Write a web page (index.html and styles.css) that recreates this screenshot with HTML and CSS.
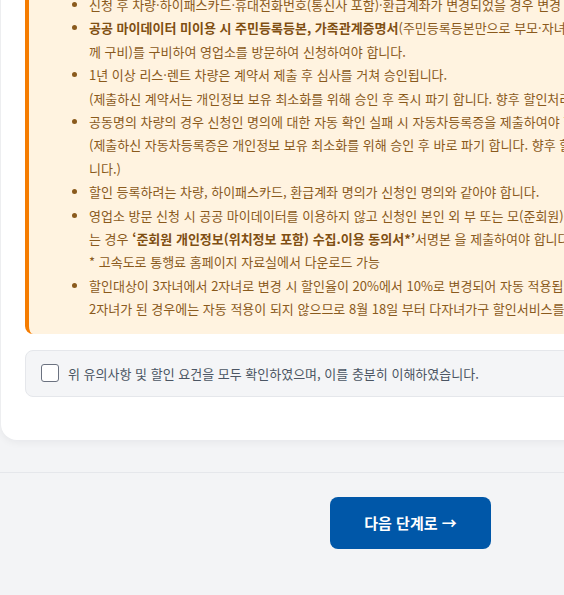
FILE: index.html
```html
<!DOCTYPE html>
<html lang="ko">
<head>
<meta charset="utf-8">
<title>다자녀가구 할인 신청</title>
<link rel="stylesheet" href="styles.css">
</head>
<body>
<main class="page">
  <section class="card">
    <div class="notice">
      <ul class="notice-list">
        <li>신청 후 차량·하이패스카드·휴대전화번호(통신사 포함)·환급계좌가 변경되었을 경우 변경 신청을 하여야 합니다.</li>
        <li><strong>공공 마이데이터 미이용 시 주민등록등본, 가족관계증명서</strong>(주민등록등본만으로 부모·자녀 관계 확인이 어려운 경우 함<br>께 구비)를 구비하여 영업소를 방문하여 신청하여야 합니다.</li>
        <li>1년 이상 리스·렌트 차량은 계약서 제출 후 심사를 거쳐 승인됩니다.<br>(제출하신 계약서는 개인정보 보유 최소화를 위해 승인 후 즉시 파기 합니다. 향후 할인처리 시 재제출)</li>
        <li>공동명의 차량의 경우 신청인 명의에 대한 자동 확인 실패 시 자동차등록증을 제출하여야 합니다.<br>(제출하신 자동차등록증은 개인정보 보유 최소화를 위해 승인 후 바로 파기 합니다. 향후 할인 시 재제출 하셔야 합<br>니다.)</li>
        <li>할인 등록하려는 차량, 하이패스카드, 환급계좌 명의가 신청인 명의와 같아야 합니다.</li>
        <li>영업소 방문 신청 시 공공 마이데이터를 이용하지 않고 신청인 본인 외 부 또는 모(준회원)를 등록하려<br>는 경우 <strong>‘준회원 개인정보(위치정보 포함) 수집.이용 동의서*’</strong>서명본 을 제출하여야 합니다.<br>* 고속도로 통행료 홈페이지 자료실에서 다운로드 가능</li>
        <li>할인대상이 3자녀에서 2자녀로 변경 시 할인율이 20%에서 10%로 변경되어 자동 적용됩니다.<br>2자녀가 된 경우에는 자동 적용이 되지 않으므로 8월 18일 부터 다자녀가구 할인서비스를 신청하세요.</li>
      </ul>
    </div>
    <label class="agree">
      <input class="agree-check" type="checkbox">
      <span class="agree-text">위 유의사항 및 할인 요건을 모두 확인하였으며, 이를 충분히 이해하였습니다.</span>
    </label>
  </section>
  <footer class="actions">
    <button class="btn-next" type="button">다음 단계로 →</button>
  </footer>
</main>
</body>
</html>
```

FILE: styles.css
```css
html, body {
  margin: 0;
  padding: 0;
  background: #f3f4f6;
  overflow-x: hidden;
}

body {
  font-family: "Noto Sans CJK KR", "Noto Sans", sans-serif;
}

.page {
  width: 821px;
  min-height: 640px;
}

.card {
  margin: -47px 0 0 1px;
  background: #ffffff;
  border-radius: 16px;
  box-shadow: 0 2px 8px rgba(15, 23, 42, 0.06);
  padding: 24px 24px 43px;
}

.notice {
  background: #fff3e0;
  border-left: 4px solid #f57c00;
  border-radius: 8px;
  padding: 16px 20px 13px;
}

.notice-list {
  margin: 0;
  padding-left: 40px;
  color: #8a5a1c;
  font-size: 13px;
  line-height: 23.4px;
  white-space: nowrap;
}

.notice-list strong {
  font-weight: 700;
  color: #7f4f12;
}

.agree {
  margin-top: 16px;
  display: flex;
  align-items: center;
  gap: 9px;
  background: #f4f5f7;
  border: 1px solid #e5e7eb;
  border-radius: 8px;
  padding: 13px 15px;
  cursor: pointer;
}

.agree-check {
  appearance: none;
  -webkit-appearance: none;
  margin: 0;
  width: 18px;
  height: 18px;
  flex: none;
  border: 1.5px solid #6b7280;
  border-radius: 3px;
  background: #ffffff;
}

.agree-text {
  color: #4b5563;
  font-size: 13px;
  line-height: 19px;
}

.actions {
  margin-top: 32px;
  border-top: 1px solid #e5e7eb;
  padding-top: 24px;
  display: flex;
  justify-content: center;
}

.btn-next {
  width: 161px;
  height: 52px;
  border: 0;
  border-radius: 8px;
  background: #0057a8;
  color: #ffffff;
  font-family: "Noto Sans CJK KR", "Noto Sans", sans-serif;
  font-size: 15px;
  font-weight: 700;
  cursor: pointer;
}
```
